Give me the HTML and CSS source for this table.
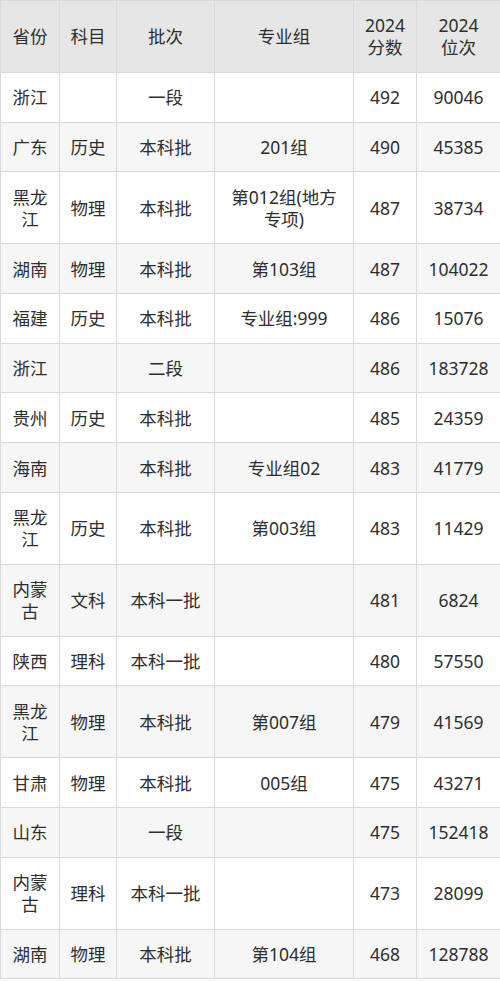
FILE: index.html
```html
<!DOCTYPE html>
<html lang="zh">
<head>
<meta charset="utf-8">
<link rel="stylesheet" href="styles.css">
</head>
<body>
<table class="score-table">
  <colgroup>
    <col class="c1"><col class="c2"><col class="c3"><col class="c4"><col class="c5"><col class="c6">
  </colgroup>
  <thead>
    <tr><th>省份</th><th>科目</th><th>批次</th><th>专业组</th><th>2024<br>分数</th><th>2024<br>位次</th></tr>
  </thead>
  <tbody>
    <tr><td>浙江</td><td></td><td>一段</td><td></td><td>492</td><td>90046</td></tr>
    <tr><td>广东</td><td>历史</td><td>本科批</td><td>201组</td><td>490</td><td>45385</td></tr>
    <tr><td>黑龙<br>江</td><td>物理</td><td>本科批</td><td>第012组(地方<br>专项)</td><td>487</td><td>38734</td></tr>
    <tr><td>湖南</td><td>物理</td><td>本科批</td><td>第103组</td><td>487</td><td>104022</td></tr>
    <tr><td>福建</td><td>历史</td><td>本科批</td><td>专业组:999</td><td>486</td><td>15076</td></tr>
    <tr><td>浙江</td><td></td><td>二段</td><td></td><td>486</td><td>183728</td></tr>
    <tr><td>贵州</td><td>历史</td><td>本科批</td><td></td><td>485</td><td>24359</td></tr>
    <tr><td>海南</td><td></td><td>本科批</td><td>专业组02</td><td>483</td><td>41779</td></tr>
    <tr><td>黑龙<br>江</td><td>历史</td><td>本科批</td><td>第003组</td><td>483</td><td>11429</td></tr>
    <tr><td>内蒙<br>古</td><td>文科</td><td>本科一批</td><td></td><td>481</td><td>6824</td></tr>
    <tr><td>陕西</td><td>理科</td><td>本科一批</td><td></td><td>480</td><td>57550</td></tr>
    <tr><td>黑龙<br>江</td><td>物理</td><td>本科批</td><td>第007组</td><td>479</td><td>41569</td></tr>
    <tr><td>甘肃</td><td>物理</td><td>本科批</td><td>005组</td><td>475</td><td>43271</td></tr>
    <tr><td>山东</td><td></td><td>一段</td><td></td><td>475</td><td>152418</td></tr>
    <tr><td>内蒙<br>古</td><td>理科</td><td>本科一批</td><td></td><td>473</td><td>28099</td></tr>
    <tr><td>湖南</td><td>物理</td><td>本科批</td><td>第104组</td><td>468</td><td>128788</td></tr>
  </tbody>
</table>
</body>
</html>
```
FILE: styles.css
```css
html, body {
  margin: 0;
  padding: 0;
  background: #ffffff;
}
.score-table {
  border-collapse: collapse;
  table-layout: fixed;
  width: 500px;
  font-family: "Noto Sans", "Noto Sans CJK SC", sans-serif;
  font-size: 17.5px;
  line-height: 22px;
  color: #2e2e2e;
}
.c1 { width: 59px; }
.c2 { width: 57px; }
.c3 { width: 98px; }
.c4 { width: 139px; }
.c5 { width: 63px; }
.c6 { width: 84px; }
.score-table th,
.score-table td {
  border: 1px solid #d9d9d9;
  padding: 13.4px 2px;
  text-align: center;
  vertical-align: middle;
  font-weight: normal;
}
.score-table thead th {
  background: #e6e6e6;
}
.score-table tbody tr:nth-child(even) td {
  background: #f6f6f6;
}
.score-table tbody tr:nth-child(odd) td {
  background: #ffffff;
}
```
